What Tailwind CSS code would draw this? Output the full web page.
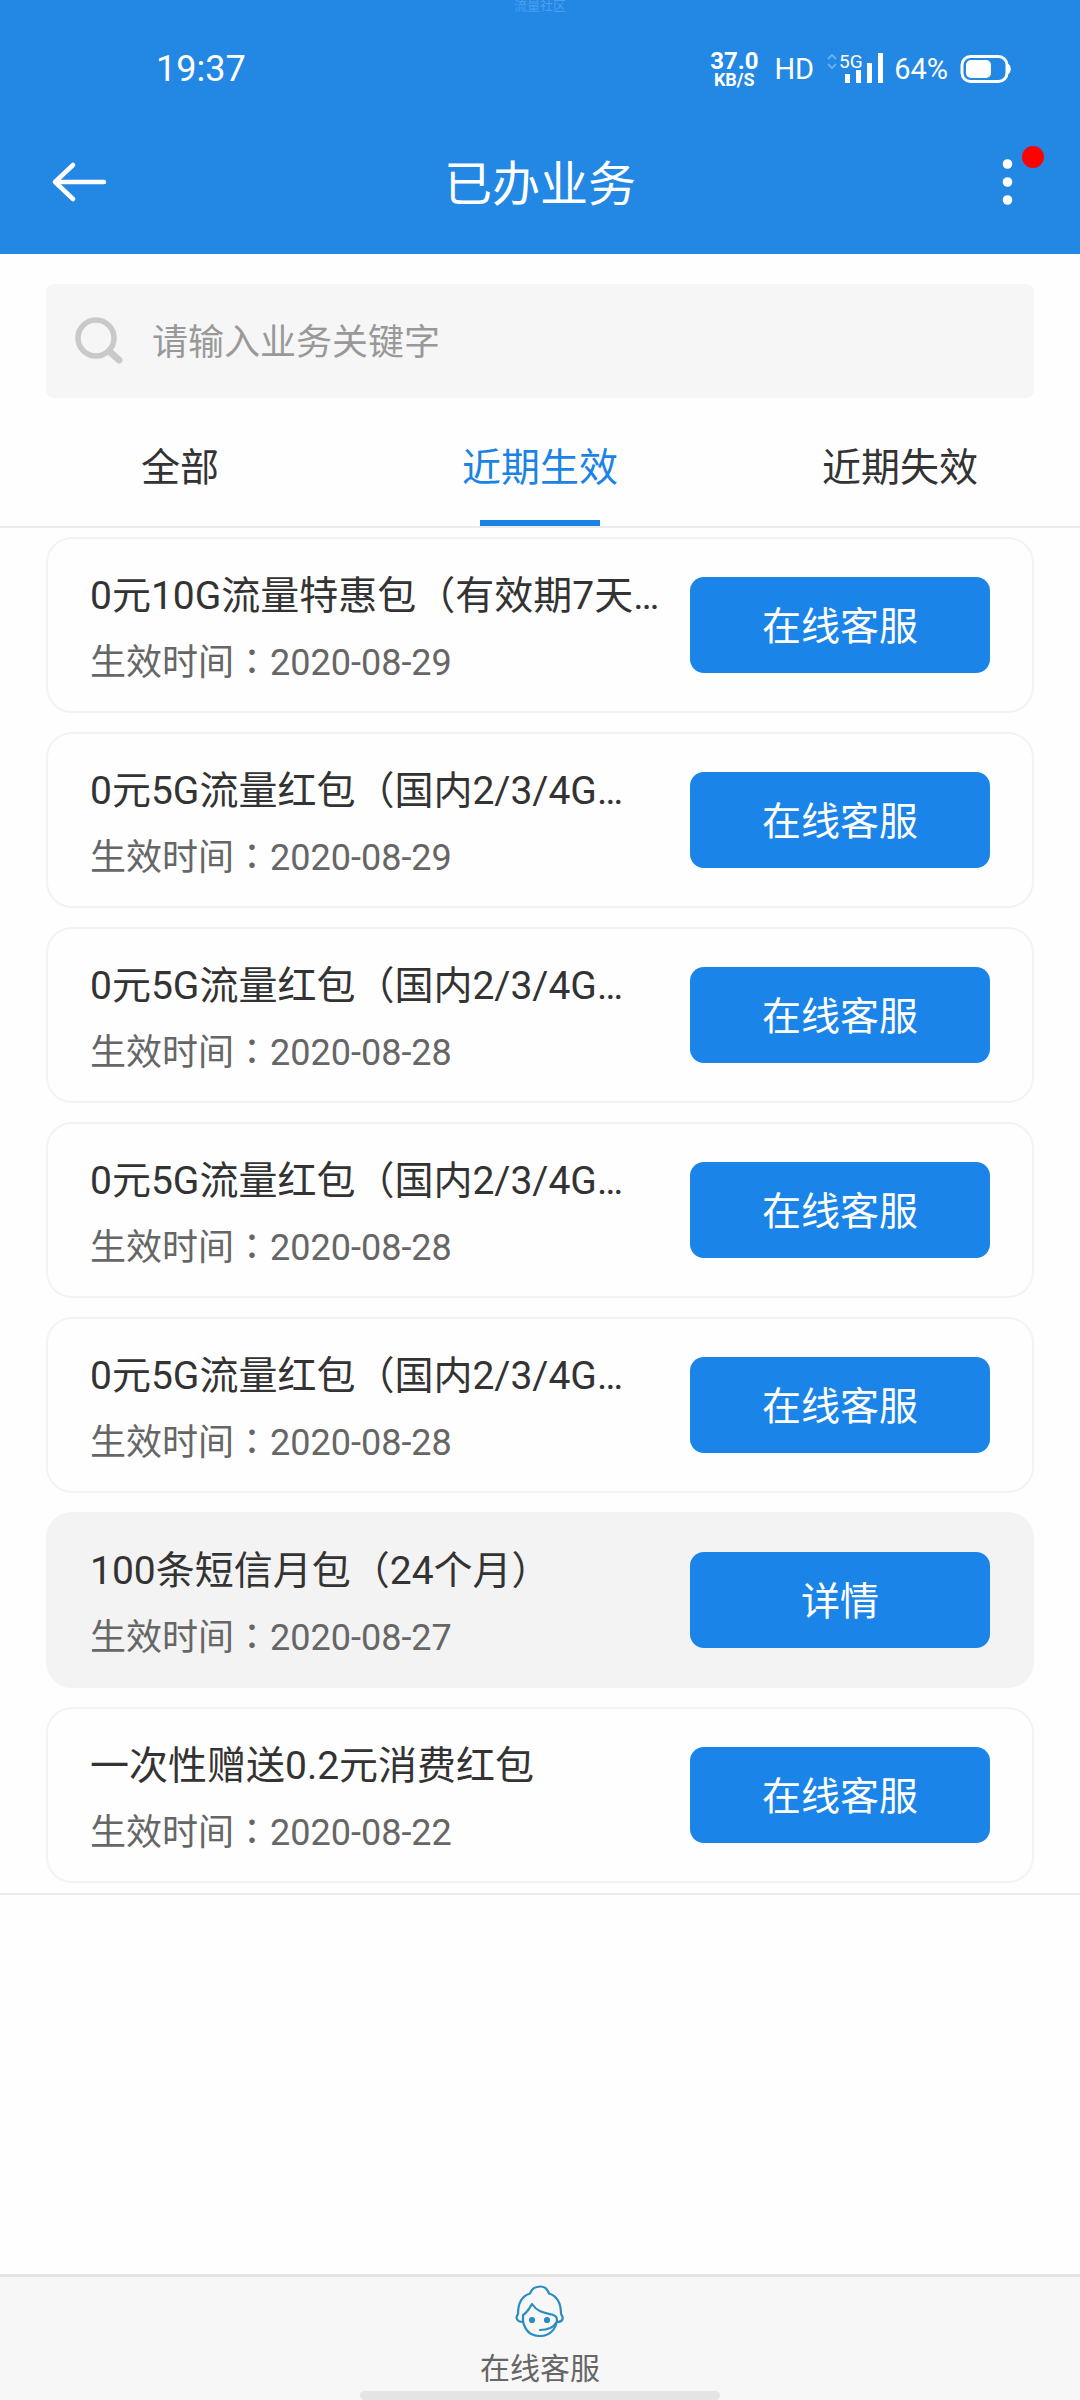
<!DOCTYPE html>
<html lang="zh-CN">
<head>
<meta charset="utf-8">
<meta name="viewport" content="width=device-width, initial-scale=1">
<title>已办业务</title>
<script src="https://cdn.jsdelivr.net/npm/@tailwindcss/browser@4"></script>
</head>
<body class="flex min-h-screen flex-col bg-[#fefefe] font-['Roboto','Noto_Sans_CJK_SC',sans-serif] text-[#333]">

<header class="relative bg-[#2387e4] text-white">
  <p class="absolute inset-x-0 top-0 text-center text-[13px] leading-3 text-[#4a9ff0]">流量社区</p>
  <div class="flex h-[138px] items-center justify-between pr-[68px] pl-[156px]">
    <time class="text-[36px] leading-10">19:37</time>
    <div class="flex items-center">
      <div class="mr-4 flex flex-col items-center gap-px font-bold">
        <span class="text-[24px] leading-5">37.0</span>
        <span class="text-[18px] leading-4">KB/S</span>
      </div>
      <span class="mr-3 text-[29px] leading-10">HD</span>
      <svg class="mr-2 h-10 w-[60px]" viewBox="827 50 60 40" role="img" aria-label="5G 信号">
        <path d="M829 60l4-4 4 4M829 65l4 4 4-4" fill="none" stroke="#62b0f6" stroke-width="2"/>
        <text x="840" y="69" font-size="19" fill="#fff">5G</text>
        <path d="M846 75h5v9h-5zM857 71h5v13h-5zM868 64h5v20h-5zM879 54h5v30h-5z" fill="#fff"/>
      </svg>
      <span class="mr-3 text-[29px] leading-10">64%</span>
      <svg class="h-[28px] w-[52px]" viewBox="0 0 52 28" role="img" aria-label="电池">
        <rect x="2" y="1.500" width="45" height="25" rx="8.500" fill="none" stroke="#fff" stroke-width="3"/>
        <rect x="6" y="5" width="25" height="18" rx="5" fill="#fff"/>
        <path d="M48 9c3 2 3 8 0 10z" fill="#fff" stroke="#fff"/>
      </svg>
    </div>
  </div>
  <div class="flex h-[116px] items-start justify-between px-12 pt-3">
    <button type="button" aria-label="返回" class="flex h-16 w-16 items-center">
      <svg class="h-10 w-16" viewBox="0 0 64 40" fill="none" stroke="#fff" stroke-width="4.500" stroke-linecap="round" stroke-linejoin="round"><path d="M56 20H8M25 3L7 20l18 17"/></svg>
    </button>
    <h1 class="text-[48px] leading-[70px]">已办业务</h1>
    <button type="button" aria-label="更多" class="relative flex h-16 w-16 items-center justify-end">
      <svg class="h-12 w-12" viewBox="0 0 48 48" fill="#fff"><circle cx="23.500" cy="6" r="4.800"/><circle cx="23.500" cy="24" r="4.800"/><circle cx="23.500" cy="42" r="4.800"/></svg>
      <span class="absolute -top-1 -right-3 h-[22px] w-[22px] rounded-full bg-[#fe0202]"></span>
    </button>
  </div>
</header>

<main class="flex-1 pt-[30px]">
  <label class="mx-[46px] flex h-[114px] items-center rounded-lg bg-[#f6f6f6] pl-7">
    <svg class="h-[50px] w-[50px] shrink-0" viewBox="0 0 50 50" fill="none" stroke="#c9c9c9" stroke-linecap="round"><circle cx="22" cy="22" r="18" stroke-width="5.500"/><path d="M36 36l9 8" stroke-width="7"/></svg>
    <input type="search" aria-label="搜索业务" placeholder="请输入业务关键字" class="ml-7 h-16 min-w-0 flex-1 bg-transparent pt-1 text-[36px] outline-none placeholder:text-[#999]">
  </label>

  <nav class="grid h-[130px] grid-cols-3 border-b-2 border-[#ebebeb] text-[39px]">
    <a href="#" class="flex items-center justify-center pt-3">全部</a>
    <a href="#" aria-current="page" class="relative flex items-center justify-center pt-3 text-[#1b83e6]">近期生效<span class="absolute bottom-0 left-1/2 h-[6px] w-[120px] -translate-x-1/2 bg-[#1b83e6]"></span></a>
    <a href="#" class="flex items-center justify-center pt-3">近期失效</a>
  </nav>

  <ul id="list" class="flex flex-col gap-[19px] border-b-2 border-[#ebebeb] px-[46px] pt-[9px] pb-[10px]"></ul>
</main>

<footer class="flex h-[126px] flex-col items-center justify-between overflow-hidden border-t-[3px] border-[#e6e6e6] bg-[#f7f7f7] pt-2">
  <a href="#" class="flex flex-col items-center gap-4 text-[#666]">
    <svg class="h-[52px] w-[50px]" viewBox="0 0 50 52" fill="none" stroke="#2b8cc4" stroke-width="2.200" stroke-linecap="round" stroke-linejoin="round">
      <path d="M8 37C2 37 0 33 3 29C3 18 7 11 15 8.500C17 3.500 20 1.500 25 1.500S32 3.500 34 8.500C42 11 46 18 46 29C49 33 48 37 42 37"/>
      <path d="M8 36V30C12 28 14 24 17 19C23 28 31 28 37 29.500C41 30.500 42 32 42 35C41 45 34 51 25 51S10 46 8 36"/>
      <path d="M25 45C33 45 38 43 41 38"/>
      <g fill="#2b8cc4"><circle cx="17" cy="35" r="2"/><circle cx="32" cy="35" r="2"/></g>
    </svg>
    <span class="text-[30px] leading-8">在线客服</span>
  </a>
  <div class="h-[9px] w-1/3 shrink-0 rounded-full bg-[#e4e4e4]"></div>
</footer>

<template id="row">
  <li class="flex h-[176px] items-center justify-between rounded-[26px] border-2 border-[#f3f3f3] pr-[42px] pl-[42px]">
    <div class="min-w-0 pt-2">
      <h2 class="text-[39px] leading-[64px] whitespace-nowrap"></h2>
      <p class="text-[36px] leading-[62px] whitespace-nowrap text-[#666]">生效时间<span lang="zh-TW" class="font-['Noto_Sans_CJK_TC',sans-serif]">：</span><time></time></p>
    </div>
    <button type="button" class="h-24 w-[300px] shrink-0 rounded-[14px] bg-[#1a84e9] pt-1 text-[39px] text-white"></button>
  </li>
</template>

<script>
  const items = [
    ['0元10G流量特惠包（有效期7天…', '2020-08-29', '在线客服'],
    ['0元5G流量红包（国内2/3/4G…', '2020-08-29', '在线客服'],
    ['0元5G流量红包（国内2/3/4G…', '2020-08-28', '在线客服'],
    ['0元5G流量红包（国内2/3/4G…', '2020-08-28', '在线客服'],
    ['0元5G流量红包（国内2/3/4G…', '2020-08-28', '在线客服'],
    ['100条短信月包（24个月）', '2020-08-27', '详情'],
    ['一次性赠送0.2元消费红包', '2020-08-22', '在线客服'],
  ];
  const list = document.getElementById('list');
  const row = document.getElementById('row');
  for (const [title, date, action] of items) {
    const li = row.content.cloneNode(true).firstElementChild;
    li.querySelector('h2').textContent = title;
    li.querySelector('time').textContent = date;
    li.querySelector('button').textContent = action;
    if (action === '详情') li.classList.add('bg-[#f3f3f3]');
    list.append(li);
  }
</script>
</body>
</html>
